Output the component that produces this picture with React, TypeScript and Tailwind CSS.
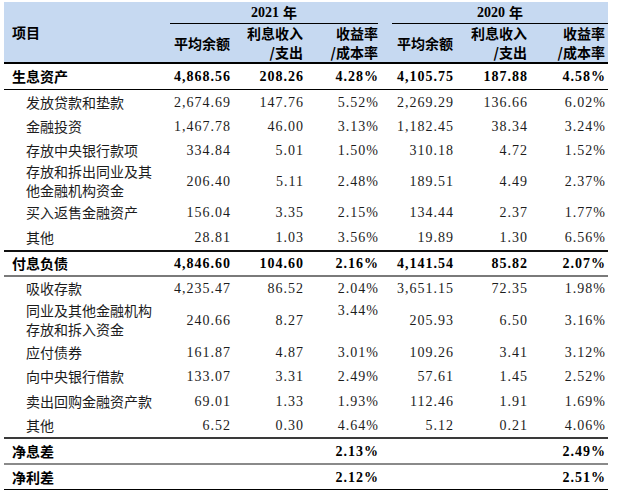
const cols = 'grid grid-cols-[161px_68px_73px_75px_75px_74px_78px]';
const cjk = "font-['Noto_Sans_CJK_SC','Noto_Sans_CJK_JP',sans-serif]";
const num = "font-['Liberation_Serif','Noto_Sans_CJK_SC',serif] tracking-[1px]";

type Row = {
  label: string[];
  vals: string[];
  bold?: boolean;
  h: string;
  border?: string;
  liftRate?: boolean;
};

const rows: Row[] = [
  { label: ['生息资产'], vals: ['4,868.56', '208.26', '4.28%', '4,105.75', '187.88', '4.58%'], bold: true, h: 'h-[26px]', border: 'border-b border-black' },
  { label: ['发放贷款和垫款'], vals: ['2,674.69', '147.76', '5.52%', '2,269.29', '136.66', '6.02%'], h: 'h-[24px]' },
  { label: ['金融投资'], vals: ['1,467.78', '46.00', '3.13%', '1,182.45', '38.34', '3.24%'], h: 'h-[24px]' },
  { label: ['存放中央银行款项'], vals: ['334.84', '5.01', '1.50%', '310.18', '4.72', '1.52%'], h: 'h-[24px]' },
  { label: ['存放和拆出同业及其', '他金融机构资金'], vals: ['206.40', '5.11', '2.48%', '189.51', '4.49', '2.37%'], h: 'h-[38px]' },
  { label: ['买入返售金融资产'], vals: ['156.04', '3.35', '2.15%', '134.44', '2.37', '1.77%'], h: 'h-[25px]' },
  { label: ['其他'], vals: ['28.81', '1.03', '3.56%', '19.89', '1.30', '6.56%'], h: 'h-[27px]', border: 'border-b-2 border-[#111]' },
  { label: ['付息负债'], vals: ['4,846.60', '104.60', '2.16%', '4,141.54', '85.82', '2.07%'], bold: true, h: 'h-[25px]', border: 'border-b-2 border-[#7a7a7a]' },
  { label: ['吸收存款'], vals: ['4,235.47', '86.52', '2.04%', '3,651.15', '72.35', '1.98%'], h: 'h-[23px]' },
  { label: ['同业及其他金融机构', '存放和拆入资金'], vals: ['240.66', '8.27', '3.44%', '205.93', '6.50', '3.16%'], h: 'h-[40px]', liftRate: true },
  { label: ['应付债券'], vals: ['161.87', '4.87', '3.01%', '109.26', '3.41', '3.12%'], h: 'h-[24px]' },
  { label: ['向中央银行借款'], vals: ['133.07', '3.31', '2.49%', '57.61', '1.45', '2.52%'], h: 'h-[25px]' },
  { label: ['卖出回购金融资产款'], vals: ['69.01', '1.33', '1.93%', '112.46', '1.91', '1.69%'], h: 'h-[24px]' },
  { label: ['其他'], vals: ['6.52', '0.30', '4.64%', '5.12', '0.21', '4.06%'], h: 'h-[26px]', border: 'border-b-2 border-[#3a3a3a]' },
  { label: ['净息差'], vals: ['', '', '2.13%', '', '', '2.49%'], bold: true, h: 'h-[26px]', border: 'border-b-2 border-[#8a8a8a]' },
  { label: ['净利差'], vals: ['', '', '2.12%', '', '', '2.51%'], bold: true, h: 'h-[25px]', border: 'border-b border-black' },
];

function SubHead({ lines }: { lines: string[] }) {
  return (
    <div className="flex flex-col items-end justify-center pr-[3px] leading-[19px]">
      {lines.map((l) => (
        <span key={l}>{l}</span>
      ))}
    </div>
  );
}

export default function App() {
  return (
    <div className="min-h-screen bg-white pt-[2px] pl-[4px]">
      <div className="w-[604px] text-[14px] text-[#1c1c1c]">
        {/* header */}
        <div className={`${cols} grid-rows-[22px_38px] h-[62px] bg-[#c6d9f1] border-b-2 border-black ${cjk} font-bold text-black`}>
          <div className="row-span-2 flex items-center pl-[8px]">项目</div>
          <div className="col-span-3 ml-[5px] mr-[3px] flex items-center justify-center border-b border-black">
            <span className={`${num} tracking-normal`}>2021</span>
            <span className="ml-[4px]">年</span>
          </div>
          <div className="col-span-3 ml-[11px] flex items-center justify-center border-b border-black">
            <span className={`${num} tracking-normal`}>2020</span>
            <span className="ml-[4px]">年</span>
          </div>
          <SubHead lines={['平均余额']} />
          <SubHead lines={['利息收入', '/支出']} />
          <SubHead lines={['收益率', '/成本率']} />
          <SubHead lines={['平均余额']} />
          <SubHead lines={['利息收入', '/支出']} />
          <SubHead lines={['收益率', '/成本率']} />
        </div>

        {rows.map((r, i) => (
          <div key={i} className={`${cols} box-border ${r.h} ${r.border ?? ''} ${r.bold ? 'font-bold text-black' : ''}`}>
            <div className={`flex flex-col justify-center leading-[19px] ${cjk} ${r.bold ? 'pl-[8px]' : 'pl-[22px]'}`}>
              {r.label.map((l) => (
                <span key={l}>{l}</span>
              ))}
            </div>
            {r.vals.map((v, j) => (
              <div
                key={j}
                className={`flex pr-[2px] justify-end ${num} ${r.liftRate && j === 2 ? 'items-start pt-[1px] leading-[19px]' : 'items-center'}`}
              >
                {v}
              </div>
            ))}
          </div>
        ))}
      </div>
    </div>
  );
}
